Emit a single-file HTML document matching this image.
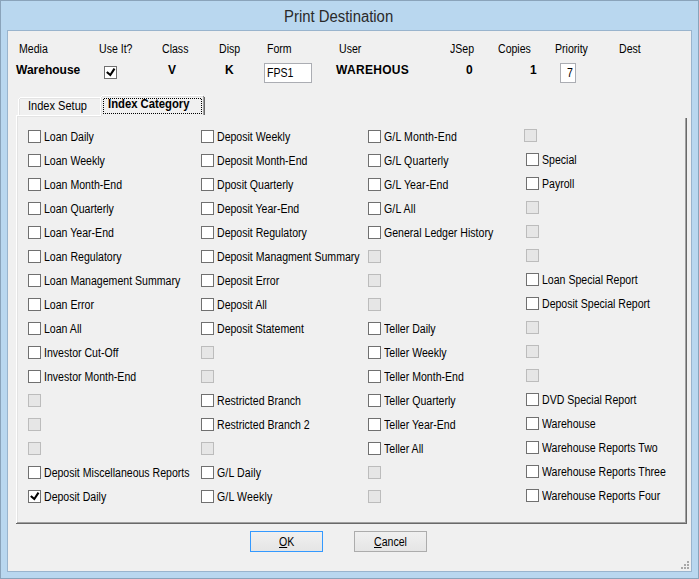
<!DOCTYPE html>
<html><head><meta charset="utf-8">
<style>
*{margin:0;padding:0;box-sizing:border-box}
html,body{width:699px;height:579px;overflow:hidden;background:#b9d7ef}
body{position:relative;font-family:"Liberation Sans",sans-serif;color:#000}
.a{position:absolute}
#win{left:0;top:0;width:699px;height:579px;border:1px solid #8aa3ba;background:#b9d7ef}
#title{left:284px;top:7px;font-size:16px;line-height:20px;color:#2a2a2a;transform-origin:0 0;transform:scaleX(.93);white-space:nowrap}
#client{left:7px;top:30px;width:685px;height:542px;border:1px solid #99b4cd;background:#f0f0f0}
.t{position:absolute;white-space:nowrap;font-size:12px;line-height:14px;transform-origin:0 0;transform:scaleX(.88)}
.b{position:absolute;white-space:nowrap;font-size:12px;line-height:14px;font-weight:bold;transform-origin:0 0}
.cb{position:absolute;width:13px;height:13px;border:1px solid #707070;background:#fff}
.cb.d{border-color:#bcbcbc;background:#e6e6e6}
.cb svg{position:absolute;left:-1px;top:-1px}
.tb{position:absolute;border:1px solid #abadb3;background:#fff}
.btn{position:absolute;width:73px;height:21px;border:1px solid #acacac;background:linear-gradient(#f0f0f0,#e5e5e5)}
</style></head><body>
<div id="win" class="a"></div>
<div id="title" class="a">Print Destination</div>
<div id="client" class="a"></div>

<!-- header labels -->
<div class="t" style="left:19px;top:42px">Media</div>
<div class="t" style="left:99px;top:42px">Use It?</div>
<div class="t" style="left:162px;top:42px">Class</div>
<div class="t" style="left:219px;top:42px">Disp</div>
<div class="t" style="left:267px;top:42px">Form</div>
<div class="t" style="left:339px;top:42px">User</div>
<div class="t" style="left:450px;top:42px">JSep</div>
<div class="t" style="left:498px;top:42px">Copies</div>
<div class="t" style="left:555px;top:42px">Priority</div>
<div class="t" style="left:619px;top:42px">Dest</div>

<!-- values -->
<div class="b" style="left:16px;top:63px">Warehouse</div>
<div class="cb" style="left:104px;top:66px"><svg width="13" height="13"><polyline points="2.8,6.0 6.3,9.0 10.5,2.7" fill="none" stroke="#000" stroke-width="2.1"/></svg></div>
<div class="b" style="left:168px;top:63px">V</div>
<div class="b" style="left:225px;top:63px">K</div>
<div class="tb" style="left:264px;top:63px;width:48px;height:20px"></div>
<div class="t" style="left:267px;top:66px">FPS1</div>
<div class="b" style="left:336px;top:63px;letter-spacing:.3px">WAREHOUS</div>
<div class="b" style="left:466px;top:63px">0</div>
<div class="b" style="left:530px;top:63px">1</div>
<div class="tb" style="left:560px;top:63px;width:16px;height:20px"></div>
<div class="t" style="left:567px;top:66px">7</div>

<!-- panel -->
<div class="a" style="left:16px;top:115px;width:1px;height:408px;background:#fff"></div>
<div class="a" style="left:16px;top:115px;width:85px;height:1px;background:#fff"></div>
<div class="a" style="left:17px;top:116px;width:1px;height:406px;background:#e3e3e3"></div>
<div class="a" style="left:17px;top:116px;width:84px;height:1px;background:#e3e3e3"></div>
<div class="a" style="left:686px;top:118px;width:1px;height:406px;background:#696969"></div>
<div class="a" style="left:685px;top:118px;width:1px;height:405px;background:#a0a0a0"></div>
<div class="a" style="left:16px;top:523px;width:671px;height:1px;background:#696969"></div>
<div class="a" style="left:17px;top:522px;width:669px;height:1px;background:#a0a0a0"></div>
<!-- unselected tab -->
<div class="a" style="left:18px;top:99px;width:1px;height:16px;background:#fff"></div>
<div class="a" style="left:19px;top:98px;width:1px;height:1px;background:#fff"></div>
<div class="a" style="left:20px;top:97px;width:80px;height:1px;background:#fff"></div>
<div class="a" style="left:19px;top:99px;width:1px;height:16px;background:#e3e3e3"></div>
<div class="a" style="left:20px;top:98px;width:80px;height:1px;background:#e3e3e3"></div>
<div class="t" style="left:27.5px;top:99px;transform:scaleX(.92)">Index Setup</div>
<!-- selected tab -->
<div class="a" style="left:101px;top:96px;width:102px;height:21px;background:#f0f0f0"></div>
<div class="a" style="left:100px;top:97px;width:1px;height:19px;background:#fff"></div>
<div class="a" style="left:101px;top:96px;width:1px;height:1px;background:#fff"></div>
<div class="a" style="left:102px;top:95px;width:101px;height:1px;background:#fff"></div>
<div class="a" style="left:101px;top:97px;width:1px;height:19px;background:#e3e3e3"></div>
<div class="a" style="left:102px;top:96px;width:101px;height:1px;background:#e3e3e3"></div>
<div class="a" style="left:203px;top:96px;width:1px;height:1px;background:#888"></div>
<div class="a" style="left:203px;top:97px;width:1px;height:18px;background:#a0a0a0"></div>
<div class="a" style="left:204px;top:97px;width:1px;height:18px;background:#696969"></div>
<div class="a" style="left:103px;top:98px;width:99px;height:1px;background:repeating-linear-gradient(90deg,transparent 0 1px,#000 1px 2px)"></div>
<div class="a" style="left:103px;top:113px;width:99px;height:1px;background:repeating-linear-gradient(90deg,#000 0 1px,transparent 1px 2px)"></div>
<div class="a" style="left:103px;top:98px;width:1px;height:16px;background:repeating-linear-gradient(180deg,transparent 0 1px,#000 1px 2px)"></div>
<div class="a" style="left:201px;top:98px;width:1px;height:16px;background:repeating-linear-gradient(180deg,transparent 0 1px,#000 1px 2px)"></div>
<div class="b" style="left:108px;top:97px;transform:scaleX(.94)">Index Category</div>

<div class="cb" style="left:28px;top:130px"></div>
<div class="t" style="left:44px;top:130px">Loan Daily</div>
<div class="cb" style="left:28px;top:154px"></div>
<div class="t" style="left:44px;top:154px">Loan Weekly</div>
<div class="cb" style="left:28px;top:178px"></div>
<div class="t" style="left:44px;top:178px">Loan Month-End</div>
<div class="cb" style="left:28px;top:202px"></div>
<div class="t" style="left:44px;top:202px">Loan Quarterly</div>
<div class="cb" style="left:28px;top:226px"></div>
<div class="t" style="left:44px;top:226px">Loan Year-End</div>
<div class="cb" style="left:28px;top:250px"></div>
<div class="t" style="left:44px;top:250px">Loan Regulatory</div>
<div class="cb" style="left:28px;top:274px"></div>
<div class="t" style="left:44px;top:274px">Loan Management Summary</div>
<div class="cb" style="left:28px;top:298px"></div>
<div class="t" style="left:44px;top:298px">Loan Error</div>
<div class="cb" style="left:28px;top:322px"></div>
<div class="t" style="left:44px;top:322px">Loan All</div>
<div class="cb" style="left:28px;top:346px"></div>
<div class="t" style="left:44px;top:346px">Investor Cut-Off</div>
<div class="cb" style="left:28px;top:370px"></div>
<div class="t" style="left:44px;top:370px">Investor Month-End</div>
<div class="cb d" style="left:28px;top:394px"></div>
<div class="cb d" style="left:28px;top:418px"></div>
<div class="cb d" style="left:28px;top:442px"></div>
<div class="cb" style="left:28px;top:466px"></div>
<div class="t" style="left:44px;top:466px">Deposit Miscellaneous Reports</div>
<div class="cb" style="left:28px;top:490px"><svg width="13" height="13"><polyline points="2.8,6.0 6.3,9.0 10.5,2.7" fill="none" stroke="#000" stroke-width="2.1"/></svg></div>
<div class="t" style="left:44px;top:490px">Deposit Daily</div>
<div class="cb" style="left:201px;top:130px"></div>
<div class="t" style="left:217px;top:130px">Deposit Weekly</div>
<div class="cb" style="left:201px;top:154px"></div>
<div class="t" style="left:217px;top:154px">Deposit Month-End</div>
<div class="cb" style="left:201px;top:178px"></div>
<div class="t" style="left:217px;top:178px">Dposit Quarterly</div>
<div class="cb" style="left:201px;top:202px"></div>
<div class="t" style="left:217px;top:202px">Deposit Year-End</div>
<div class="cb" style="left:201px;top:226px"></div>
<div class="t" style="left:217px;top:226px">Deposit Regulatory</div>
<div class="cb" style="left:201px;top:250px"></div>
<div class="t" style="left:217px;top:250px">Deposit Managment Summary</div>
<div class="cb" style="left:201px;top:274px"></div>
<div class="t" style="left:217px;top:274px">Deposit Error</div>
<div class="cb" style="left:201px;top:298px"></div>
<div class="t" style="left:217px;top:298px">Deposit All</div>
<div class="cb" style="left:201px;top:322px"></div>
<div class="t" style="left:217px;top:322px">Deposit Statement</div>
<div class="cb d" style="left:201px;top:346px"></div>
<div class="cb d" style="left:201px;top:370px"></div>
<div class="cb" style="left:201px;top:394px"></div>
<div class="t" style="left:217px;top:394px">Restricted Branch</div>
<div class="cb" style="left:201px;top:418px"></div>
<div class="t" style="left:217px;top:418px">Restricted Branch 2</div>
<div class="cb d" style="left:201px;top:442px"></div>
<div class="cb" style="left:201px;top:466px"></div>
<div class="t" style="left:217px;top:466px;letter-spacing:.15px">G/L Daily</div>
<div class="cb" style="left:201px;top:490px"></div>
<div class="t" style="left:217px;top:490px;letter-spacing:.15px">G/L Weekly</div>
<div class="cb" style="left:368px;top:130px"></div>
<div class="t" style="left:384px;top:130px;letter-spacing:.15px">G/L Month-End</div>
<div class="cb" style="left:368px;top:154px"></div>
<div class="t" style="left:384px;top:154px;letter-spacing:.15px">G/L Quarterly</div>
<div class="cb" style="left:368px;top:178px"></div>
<div class="t" style="left:384px;top:178px;letter-spacing:.15px">G/L Year-End</div>
<div class="cb" style="left:368px;top:202px"></div>
<div class="t" style="left:384px;top:202px;letter-spacing:.15px">G/L All</div>
<div class="cb" style="left:368px;top:226px"></div>
<div class="t" style="left:384px;top:226px">General Ledger History</div>
<div class="cb d" style="left:368px;top:250px"></div>
<div class="cb d" style="left:368px;top:274px"></div>
<div class="cb d" style="left:368px;top:298px"></div>
<div class="cb" style="left:368px;top:322px"></div>
<div class="t" style="left:384px;top:322px">Teller Daily</div>
<div class="cb" style="left:368px;top:346px"></div>
<div class="t" style="left:384px;top:346px">Teller Weekly</div>
<div class="cb" style="left:368px;top:370px"></div>
<div class="t" style="left:384px;top:370px">Teller Month-End</div>
<div class="cb" style="left:368px;top:394px"></div>
<div class="t" style="left:384px;top:394px">Teller Quarterly</div>
<div class="cb" style="left:368px;top:418px"></div>
<div class="t" style="left:384px;top:418px">Teller Year-End</div>
<div class="cb" style="left:368px;top:442px"></div>
<div class="t" style="left:384px;top:442px">Teller All</div>
<div class="cb d" style="left:368px;top:466px"></div>
<div class="cb d" style="left:368px;top:490px"></div>
<div class="cb d" style="left:524px;top:129px"></div>
<div class="cb" style="left:526px;top:153px"></div>
<div class="t" style="left:542px;top:153px">Special</div>
<div class="cb" style="left:526px;top:177px"></div>
<div class="t" style="left:542px;top:177px">Payroll</div>
<div class="cb d" style="left:526px;top:201px"></div>
<div class="cb d" style="left:526px;top:225px"></div>
<div class="cb d" style="left:526px;top:249px"></div>
<div class="cb" style="left:526px;top:273px"></div>
<div class="t" style="left:542px;top:273px">Loan Special Report</div>
<div class="cb" style="left:526px;top:297px"></div>
<div class="t" style="left:542px;top:297px">Deposit Special Report</div>
<div class="cb d" style="left:526px;top:321px"></div>
<div class="cb d" style="left:526px;top:345px"></div>
<div class="cb d" style="left:526px;top:369px"></div>
<div class="cb" style="left:526px;top:393px"></div>
<div class="t" style="left:542px;top:393px">DVD Special Report</div>
<div class="cb" style="left:526px;top:417px"></div>
<div class="t" style="left:542px;top:417px">Warehouse</div>
<div class="cb" style="left:526px;top:441px"></div>
<div class="t" style="left:542px;top:441px">Warehouse Reports Two</div>
<div class="cb" style="left:526px;top:465px"></div>
<div class="t" style="left:542px;top:465px">Warehouse Reports Three</div>
<div class="cb" style="left:526px;top:489px"></div>
<div class="t" style="left:542px;top:489px">Warehouse Reports Four</div>

<!-- grip -->
<div class="a" style="left:687px;top:561px;width:2px;height:2px;background:#a8a8a8"></div><div class="a" style="left:684px;top:564px;width:2px;height:2px;background:#a8a8a8"></div><div class="a" style="left:687px;top:564px;width:2px;height:2px;background:#a8a8a8"></div><div class="a" style="left:681px;top:567px;width:2px;height:2px;background:#a8a8a8"></div><div class="a" style="left:684px;top:567px;width:2px;height:2px;background:#a8a8a8"></div><div class="a" style="left:687px;top:567px;width:2px;height:2px;background:#a8a8a8"></div>
<!-- buttons -->
<div class="btn" style="left:250px;top:531px;border-color:#3399ff"></div>
<div class="t" style="left:279px;top:535px"><u>O</u>K</div>
<div class="btn" style="left:354px;top:531px"></div>
<div class="t" style="left:374px;top:535px"><u>C</u>ancel</div>
</body></html>
